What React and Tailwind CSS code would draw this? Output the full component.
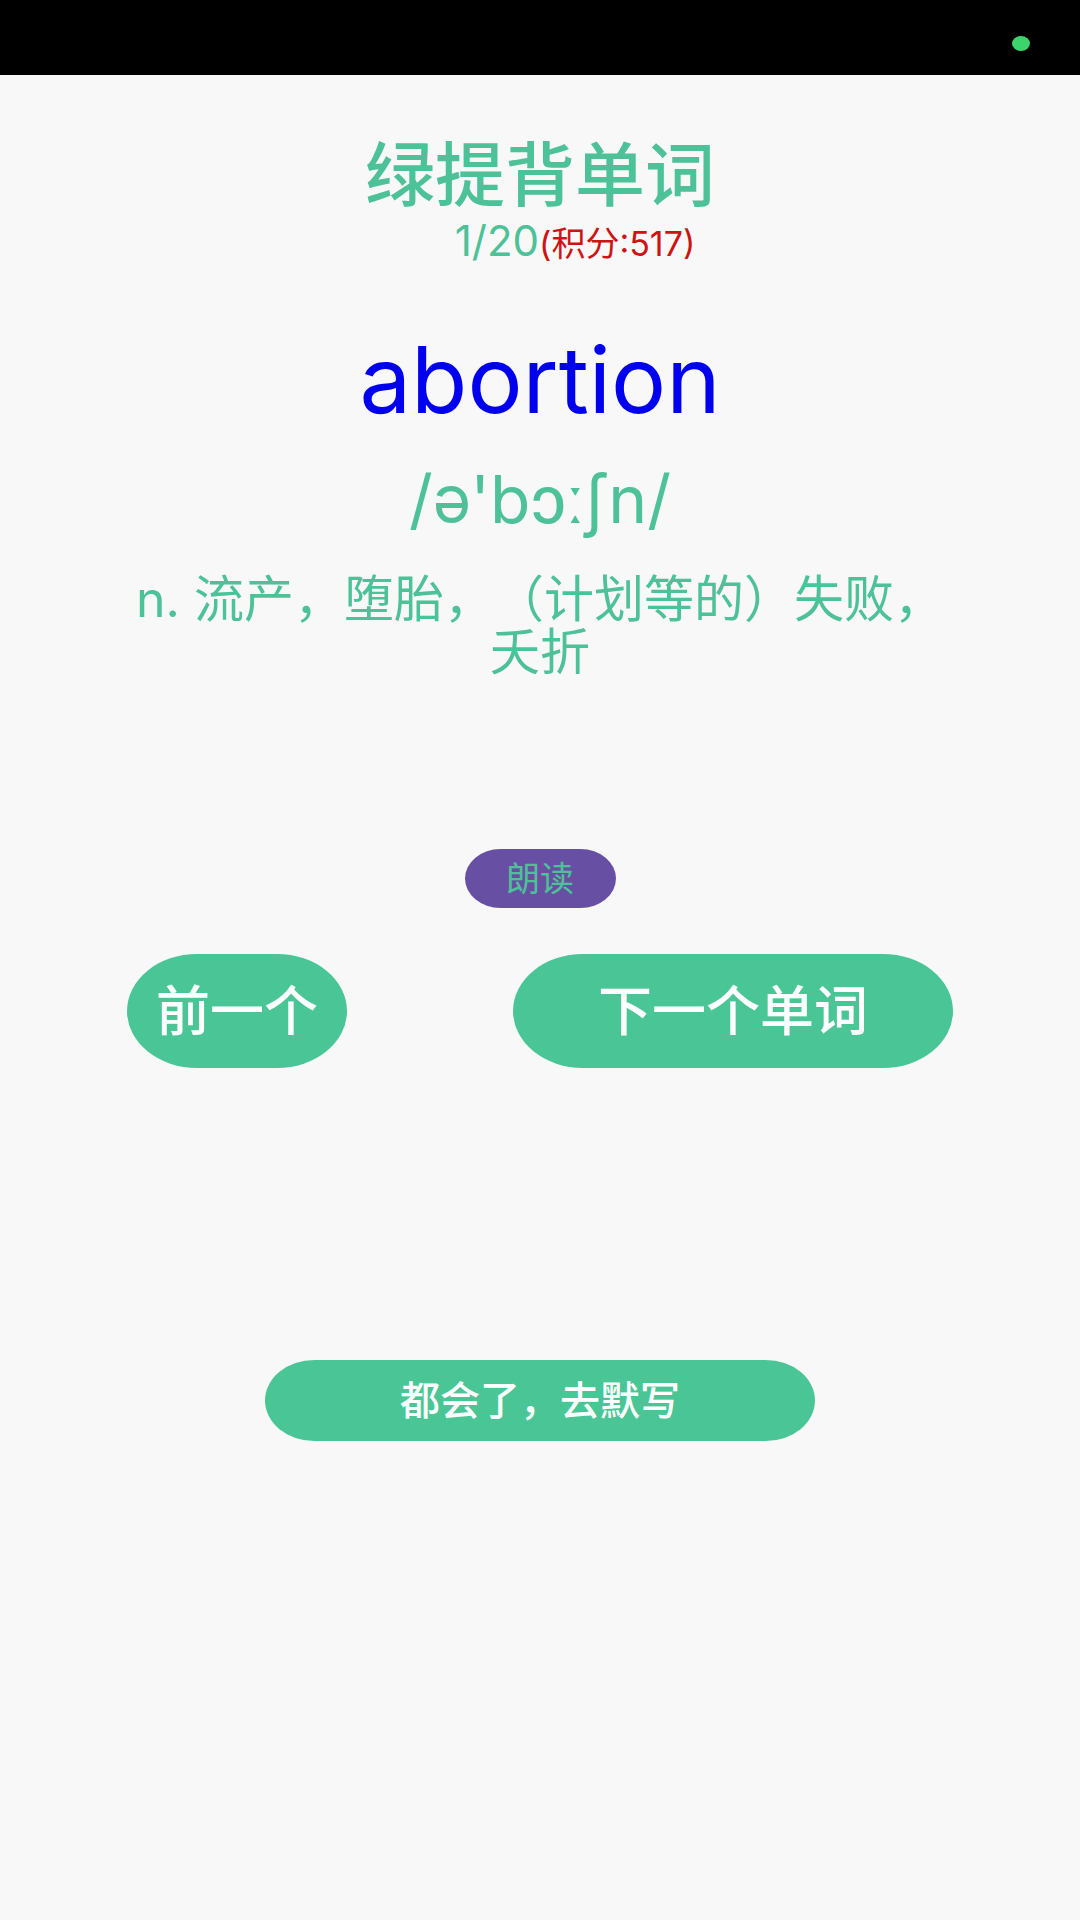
import { useState } from "react";
import clsx from "clsx";

const TOTAL = 20;

const WORD = {
  text: "abortion",
  phonetic: "/ə'bɔːʃn/",
  meaning: "n. 流产，堕胎，（计划等的）失败，夭折",
};

const GreenButton = ({ className, children, ...otherProps }) => (
  <button
    type="button"
    className={clsx(
      "flex items-center justify-center bg-[#4ac696] font-medium text-white",
      className
    )}
    {...otherProps}
  >
    {children}
  </button>
);

const StatusBar = () => (
  <div className="flex h-[75px] items-center justify-end bg-black px-[50px] pt-3">
    <span className="h-[15px] w-[18px] rounded-[50%] bg-[#3bd56c]" />
  </div>
);

const App = () => {
  const [index, setIndex] = useState(1);

  const showPrevious = () => setIndex(current => Math.max(1, current - 1));
  const showNext = () => setIndex(current => Math.min(TOTAL, current + 1));

  return (
    <div className="min-h-screen bg-[#f8f8f8] font-[Inter,'Noto_Sans_CJK_SC',sans-serif] text-[#4dc197] [text-spacing-trim:space-all]">
      <StatusBar />
      <main className="flex flex-col items-center px-[127px] pt-[63px] text-center">
        <h1 className="text-[70px] leading-[76px] font-medium">绿提背单词</h1>
        <p className="flex items-baseline pt-[2px] pl-[70px] text-[42px] leading-[50px]">
          {index}/{TOTAL}
          <span className="text-[34px] text-[#cc1414]">(积分:517)</span>
        </p>
        <h2 className="pt-[56px] text-[92px] leading-[110px] text-[#0000ee]">
          {WORD.text}
        </h2>
        <p className="pt-[24px] text-[66px] leading-[80px]">{WORD.phonetic}</p>
        <p className="pt-[34px] text-[50px] leading-[53px]">{WORD.meaning}</p>
        <button
          type="button"
          className="mt-[170px] flex h-[59px] w-[151px] items-center justify-center rounded-[36px/30px] bg-[#6750a4] text-[34px]"
        >
          朗读
        </button>
        <div className="mt-[46px] flex w-full justify-between text-[54px]">
          <GreenButton
            className="h-[114px] w-[220px] rounded-[70px/57px]"
            onClick={showPrevious}
          >
            前一个
          </GreenButton>
          <GreenButton
            className="h-[114px] w-[440px] rounded-[70px/57px]"
            onClick={showNext}
          >
            下一个单词
          </GreenButton>
        </div>
        <GreenButton className="mt-[292px] h-[81px] w-2/3 rounded-[50px/41px] text-[40px]">
          都会了，去默写
        </GreenButton>
      </main>
    </div>
  );
};

export default App;
